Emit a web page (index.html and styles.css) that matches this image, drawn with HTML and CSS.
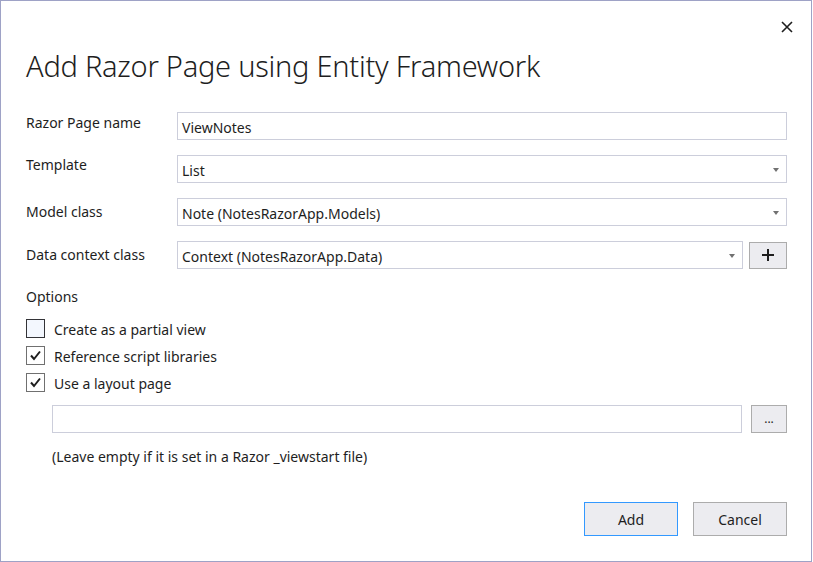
FILE: index.html
```html
<!DOCTYPE html>
<html>
<head>
<meta charset="utf-8">
<link rel="stylesheet" href="styles.css">
</head>
<body>
<div class="dialog">
  <button class="close" aria-label="Close">
    <svg width="12" height="12" viewBox="0 0 12 12"><path d="M1 1 L11 11 M11 1 L1 11" stroke="#1e1e1e" stroke-width="1.6" fill="none"/></svg>
  </button>
  <h1 class="title">Add Razor Page using Entity Framework</h1>
  <div class="form">
    <label class="lbl lbl-raised">Razor Page name</label>
    <div class="field"><div class="input">ViewNotes</div></div>
    <label class="lbl lbl-raised-more">Template</label>
    <div class="field"><div class="input select">List<span class="arrow"></span></div></div>
    <label class="lbl">Model class</label>
    <div class="field"><div class="input select">Note (NotesRazorApp.Models)<span class="arrow"></span></div></div>
    <label class="lbl">Data context class</label>
    <div class="field"><div class="input select">Context (NotesRazorApp.Data)<span class="arrow"></span></div><button class="plus"><svg width="12" height="12" viewBox="0 0 12 12"><path d="M6 0 V12 M0 6 H12" stroke="#1e1e1e" stroke-width="2" fill="none"/></svg></button></div>
  </div>
  <div class="options-title">Options</div>
  <div class="checks">
    <div class="check"><span class="box unchecked"></span><span>Create as a partial view</span></div>
    <div class="check"><span class="box"><svg width="13" height="13" viewBox="0 0 13 13"><path d="M2 6.5 L5 10 L11 2.5" stroke="#1e1e1e" stroke-width="2" fill="none"/></svg></span><span>Reference script libraries</span></div>
    <div class="check"><span class="box"><svg width="13" height="13" viewBox="0 0 13 13"><path d="M2 6.5 L5 10 L11 2.5" stroke="#1e1e1e" stroke-width="2" fill="none"/></svg></span><span>Use a layout page</span></div>
  </div>
  <div class="layout-row">
    <div class="input"></div>
    <button class="dots">...</button>
  </div>
  <div class="hint">(Leave empty if it is set in a Razor _viewstart file)</div>
  <div class="actions">
    <button class="btn primary">Add</button>
    <button class="btn">Cancel</button>
  </div>
</div>
</body>
</html>
```
FILE: styles.css
```css
* { box-sizing: border-box; }
html, body { margin: 0; padding: 0; background: #fff; }
body {
  font-family: "Noto Sans", "Open Sans", sans-serif;
  font-size: 14px;
  color: #1e1e1e;
}
.dialog {
  position: relative;
  width: 812px;
  height: 562px;
  border: 1px solid #9ea2c6;
  padding: 0 24px 0 25px;
}
.close {
  position: absolute;
  top: 19px;
  right: 17px;
  width: 14px;
  height: 14px;
  padding: 0;
  border: 0;
  background: transparent;
  display: flex;
  align-items: center;
  justify-content: center;
}
.title {
  margin: 0;
  padding-top: 45px;
  font-weight: 300;
  font-size: 29px;
  line-height: 40px;
  letter-spacing: -0.25px;
  color: #1e1e1e;
}
.form {
  margin-top: 26px;
  display: grid;
  grid-template-columns: 151px 1fr;
  row-gap: 15px;
}
.lbl {
  line-height: 20px;
  align-self: center;
}
.lbl-raised { margin-bottom: 6px; }
.lbl-raised-more { margin-bottom: 8px; }
.field { display: flex; gap: 6px; align-items: center; }
.input {
  position: relative;
  flex: 1;
  height: 28px;
  border: 1px solid #cccedb;
  background: #fff;
  padding: 2px 4px 0;
  line-height: 25px;
  white-space: nowrap;
}
.arrow {
  position: absolute;
  right: 7px;
  top: 12px;
  width: 0; height: 0;
  border-left: 3.5px solid transparent;
  border-right: 3.5px solid transparent;
  border-top: 4px solid #717171;
}
.plus {
  width: 38px;
  height: 27px;
  border: 1px solid #acacac;
  background: #ececf0;
  display: flex;
  align-items: center;
  justify-content: center;
  padding: 0;
}
.options-title {
  margin-top: 18px;
  line-height: 20px;
}
.checks {
  margin-top: 12px;
  display: flex;
  flex-direction: column;
  gap: 8px;
}
.check { display: flex; align-items: center; gap: 9px; height: 19px; }
.check span:last-child { position: relative; top: 1px; }
.box {
  width: 19px; height: 19px;
  border: 1px solid #707070;
  background: #fff;
  display: flex; align-items: center; justify-content: center;
}
.box.unchecked { border-color: #333337; background: #f3f7fe; }
.layout-row {
  margin: 13px 0 0 26px;
  display: flex;
  gap: 9px;
}
.dots {
  width: 36px;
  height: 28px;
  border: 1px solid #acacac;
  background: #ececf0;
  font: inherit;
  font-size: 12px;
  line-height: 20px;
  color: #1e1e1e;
  padding: 0;
}
.hint {
  margin: 14px 0 0 26px;
  line-height: 20px;
}
.actions {
  margin-top: 35px;
  display: flex;
  justify-content: flex-end;
  gap: 15px;
}
.btn {
  width: 94px;
  height: 34px;
  border: 1px solid #acacac;
  background: #ececf0;
  font: inherit;
  color: #1e1e1e;
  padding: 0;
}
.btn.primary { border-color: #3399ff; }
```
